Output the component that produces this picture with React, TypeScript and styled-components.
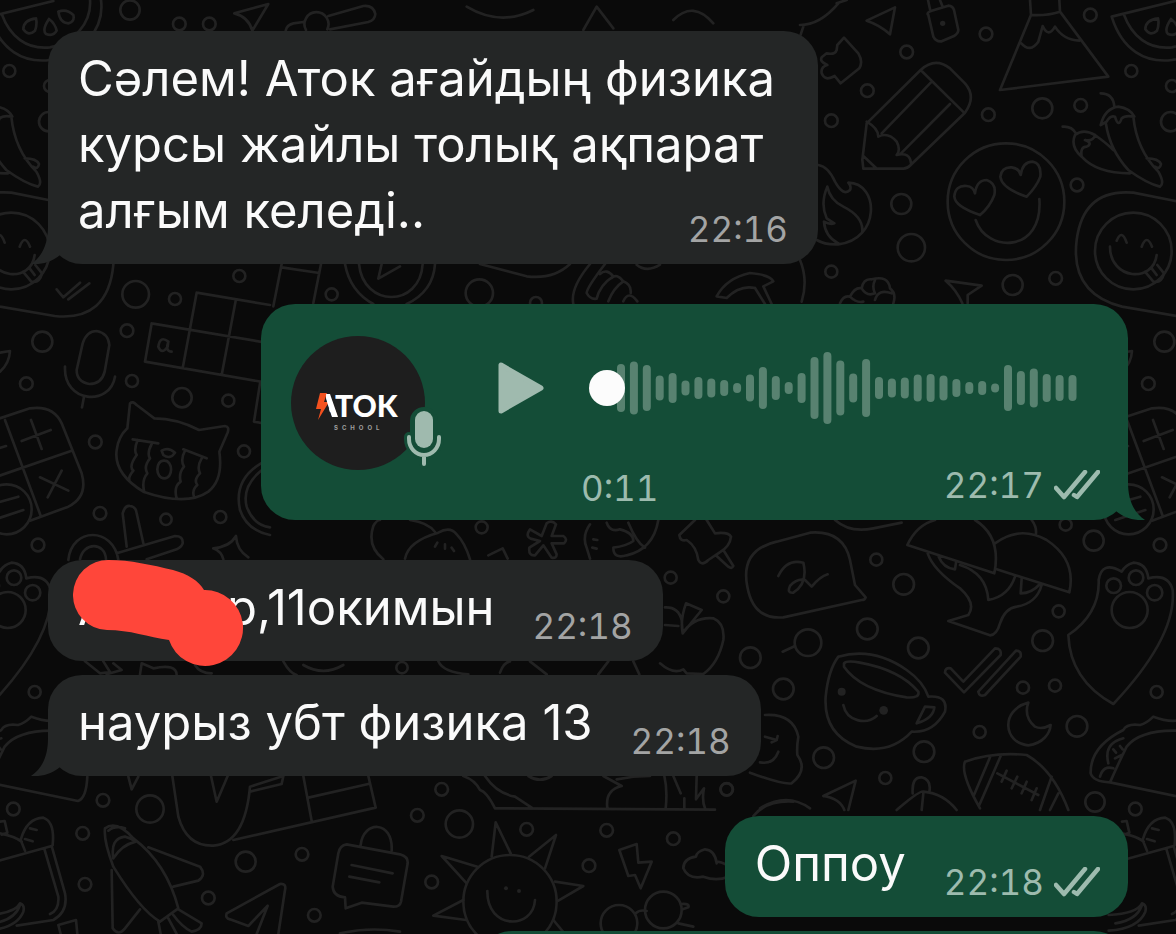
import React from "react";
import styled, { createGlobalStyle, css } from "styled-components";

const GREEN = "#144d37";
const GRAY = "#242626";

const GlobalStyle = createGlobalStyle`
  *, *::before, *::after { box-sizing: border-box; }
  body {
    margin: 0;
    background: #0a0a0a;
    font-family: Inter, "Noto Sans", sans-serif;
  }
`;

const Screen = styled.main`
  position: relative;
  height: 100vh;
  overflow: hidden;
  isolation: isolate;
`;

const Wallpaper = styled.svg`
  position: absolute;
  inset: 0;
  width: 100%;
  height: 100%;
  z-index: -1;
  fill: none;
  stroke: #222222;
  stroke-width: 8;
  stroke-linecap: round;
  stroke-linejoin: round;
`;

const Thread = styled.div`
  display: flex;
  flex-direction: column;
  gap: 40px;
  padding: 31px 48px;
`;

const Group = styled.section<{ $own?: boolean }>`
  display: flex;
  flex-direction: column;
  gap: 14px;
  align-items: ${(p) => (p.$own ? "flex-end" : "flex-start")};
`;

const bubble = css<{ $own?: boolean }>`
  position: relative;
  border-radius: 34px;
  background: ${(p) => (p.$own ? GREEN : GRAY)};
  color: #fafafa;
`;

const TextBubble = styled.article<{ $own?: boolean }>`
  ${bubble}
  display: flow-root;
  max-width: 770px;
  padding: 15px ${(p) => (p.$own ? 28 : 30)}px 20px 30px;
  font-size: 49px;
  line-height: 66px;
`;

const VoiceBubble = styled.article<{ $own?: boolean }>`
  ${bubble}
  display: flex;
  width: 867px;
  max-width: 100%;
  min-height: 216px;
  padding: 32px 28px 17px 30px;
`;

const TailShape = styled.svg<{ $own?: boolean }>`
  position: absolute;
  bottom: 0;
  width: 30px;
  height: 40px;
  fill: ${(p) => (p.$own ? GREEN : GRAY)};
  ${(p) => (p.$own ? "right: -18px; transform: scaleX(-1);" : "left: -18px;")}
`;

const Meta = styled.span<{ $own?: boolean; $inline?: boolean }>`
  display: flex;
  align-items: center;
  gap: 10px;
  font-size: 35px;
  font-variant-numeric: tabular-nums;
  line-height: 30px;
  color: ${(p) => (p.$own ? "#9dbbae" : "#a3a4a4")};
  ${(p) => p.$inline && "float: right; margin: 36px 0 0 38px;"}
`;

const TickIcon = styled.svg`
  width: 46px;
  height: 30px;
  fill: none;
  stroke: currentColor;
  stroke-width: 4.5;
  stroke-linecap: round;
  stroke-linejoin: round;
`;

const Redacted = styled.span`
  position: relative;
  display: inline-block;
  width: 149px;
`;

const Scribble = styled.svg`
  position: absolute;
  left: -5px;
  top: -16px;
  width: 172px;
  height: 108px;
  fill: #ff463a;
`;

const Avatar = styled.div`
  position: relative;
  flex: none;
  width: 134px;
  height: 134px;
`;

const Logo = styled.svg`
  display: block;
  width: 134px;
  height: 134px;
`;

const MicBadge = styled.svg`
  position: absolute;
  left: 110px;
  top: 67px;
  width: 46px;
  height: 72px;
`;

const PlayButton = styled.button`
  flex: none;
  align-self: flex-start;
  width: 48px;
  height: 54px;
  margin: 25px 0 0 72px;
  padding: 0;
  border: 0;
  background: none;
  color: #9fbaae;
  cursor: pointer;

  svg { display: block; width: 48px; height: 54px; }
`;

const Player = styled.div`
  display: flex;
  flex: 1;
  flex-direction: column;
  justify-content: space-between;
  margin-left: 36px;
`;

const Track = styled.div`
  display: grid;
  align-items: center;
  width: 488px;
  max-width: 100%;
  height: 104px;
  margin-left: 8px;

  > * { grid-area: 1 / 1; }
`;

const Wave = styled.svg`
  width: 460px;
  height: 72px;
  margin-left: 28px;
  fill: #588270;
`;

const Seek = styled.input`
  appearance: none;
  width: 100%;
  height: 36px;
  margin: 0;
  background: transparent;
  cursor: pointer;

  &::-webkit-slider-thumb {
    appearance: none;
    width: 36px;
    height: 36px;
    border: 0;
    border-radius: 50%;
    background: #fcfcfc;
  }
`;

const PlayerFooter = styled.div`
  display: flex;
  justify-content: space-between;
  align-items: flex-start;
`;

const Duration = styled(Meta)`
  padding-top: 3px;
`;

const NextBubble = styled.article<{ $own?: boolean }>`
  ${bubble}
  width: 650px;
  height: 101px;
`;

const LEVELS = [
  48, 53, 46, 25, 30, 15, 22, 19, 16, 10, 27, 42, 24, 12, 30, 62, 72, 55, 29,
  58, 22, 19, 21, 27, 28, 25, 18, 12, 14, 9, 46, 34, 39, 28, 26, 26,
];

const Tail = ({ own }: { own?: boolean }) => (
  <TailShape $own={own} viewBox="0 0 30 40" aria-hidden="true">
    <path d="M18 2C18 19 13 32 1 40C13 41 23 37 30 31V2Z" />
  </TailShape>
);

const Ticks = () => (
  <TickIcon viewBox="0 0 46 30" role="img" aria-label="Delivered">
    <path d="M2 18L10 27L31 2M20 25L23 27L44 2" />
  </TickIcon>
);

const Stamp = ({ time, own, inline }: { time: string; own?: boolean; inline?: boolean }) => (
  <Meta $own={own} $inline={inline}>
    <time>{time}</time>
    {own && <Ticks />}
  </Meta>
);

type Sheet = { at: [number, number]; rings: number[][]; dots?: number[][]; lines: string };

// Doodles are grouped in sheets, each drawn at three times its final size.
const SHEETS: Sheet[] = [
  {
    at: [0, 0],
    rings: [[538, 72, 19], [628, 72, 19], [390, 30, 29], [28, 213, 18], [718, 828, 18], [150, 258, 18]],
    lines: `M-31 50L160 3M-31 50C0 150 70 190 150 180C240 170 315 90 303 0M5 42C30 110 80 150 150 142C220 130 275 70 270 0
      M108 55Q70 60 70 88Q85 110 105 92Q112 75 108 55M147 57Q125 90 138 102Q160 110 170 92Q165 70 147 57M175 35Q180 70 205 70Q225 65 220 45Q200 25 175 35
      M703 40L805 12L757 92M703 40Q745 50 757 92M985 48L1090 18Q1120 15 1126 42Q1125 60 1105 66L990 88M918 90A36 36 0 1 1 982 88M857 92Q860 75 880 70L910 66
      M1400 20Q1500 80 1600 30M1750 90L1790 20L1840 85M2020 60Q2080 0 2140 70`,
  },
  {
    at: [800, 0],
    rings: [[558, 102, 19], [320, 156, 19], [202, 272, 19], [94, 362, 19], [871, 45, 19], [727, 325, 30], [842, 316, 19], [565, 344, 19], [831, 555, 19], [304, 612, 30], [334, 743, 41], [94, 815, 18], [638, 855, 30], [767, 835, 19], [1112, 365, 29], [618, 605, 175], [1000, 753, 115]],
    dots: [[428, 70, 8]],
    lines: `M285 22L200 62Q240 75 270 103ZM385 45Q378 38 395 32L445 17Q458 18 462 30L475 90Q475 100 462 108L425 124Q408 126 400 110ZM390 28L384 0M427 18L420 0
      M132 113L175 160Q190 185 178 205L122 250L104 228Q75 245 65 220Q62 200 82 195Q58 185 65 172L80 160Q105 165 110 150L112 135Z
      M362 210Q405 170 450 205L495 250Q530 290 495 338L332 495Q322 506 310 506L190 506L187 480L200 370ZM362 210L492 338M395 245L245 400M450 312L303 460M200 365Q235 385 235 410Q265 395 290 425Q303 450 290 465Q330 455 333 490M190 468L228 504
      M690 0L693 45L600 270L925 230L780 35L778 0M693 45Q740 48 780 35M664 130Q690 160 715 125L728 78Q745 115 765 80Q790 120 838 122
      M918 372Q930 450 985 510Q1040 550 1080 560Q1095 550 1075 515Q1010 450 1000 350M902 375Q915 325 955 320Q990 325 1003 350Q975 345 965 355Q955 385 945 350Q930 345 920 365ZM943 320Q940 280 902 280
      M845 470Q890 520 990 520M885 405Q920 430 940 450M825 405Q810 440 845 470Q840 440 860 440Q880 430 855 420Q880 425 885 405Q850 385 825 405M828 400Q815 378 788 380M1040 475Q1075 475 1083 492Q1080 510 1065 500
      M540 645Q465 620 463 590Q465 555 500 558Q520 560 525 580Q530 540 560 540Q590 550 583 585Q570 620 540 645M680 590Q605 565 601 530Q605 500 635 502Q658 505 662 525Q668 485 698 485Q725 490 721 530Q710 560 680 590M527 660C560 760 730 760 718 597
      M55 495Q85 500 105 545Q130 590 150 570Q155 560 145 548C240 550 240 720 115 733Q75 735 50 720M82 560Q90 600 130 620Q190 650 187 695M82 560Q60 610 80 655L103 670Q90 675 72 665Q75 710 115 730
      M950 722Q965 685 980 728M1025 740Q1040 700 1056 740M930 740C930 840 1060 850 1070 765M1035 815L1060 845Q1085 850 1092 820L1072 795M1055 805L1070 825
      M1111 600L1000 578Q850 565 830 720Q810 880 966 920L1130 948Q1290 965 1306 795V640L1111 600
      M120 910Q130 885 150 890Q165 860 185 865Q190 835 215 838Q265 825 270 865Q290 880 280 910M150 890Q170 910 190 905M185 865Q200 890 225 880Q215 860 225 840M225 900Q235 865 275 880M487 910Q470 870 437 842L545 857L503 885V910M0 75Q60 75 115 10M10 80L0 110M110 10L140 0M0 780Q25 840 5 905`,
  },
  {
    at: [0, 280],
    rings: [[407, 43, 40], [525, 57, 18], [381, 152, 19], [127, 185, 30], [79, 311, 19], [396, 303, 18], [546, 353, 29], [685, 362, 18], [286, 486, 19], [732, 514, 18], [300, 700, 19], [498, 718, 17], [661, 711, 18], [114, 795, 19], [20, 688, 75]],
    lines: `M170 28L190 52L240 8M205 58L268 10M248 190Q260 153 290 153Q325 160 328 195L314 275Q305 312 268 312Q230 305 230 270ZM195 260C190 370 330 380 345 290M252 350L246 382
      M590 38L810 75M455 130L810 190M435 245L800 308M590 38L548 265M707 62L665 285M455 130L435 245M780 310L762 425L800 432M505 185Q480 165 475 200Q485 225 503 200L505 185Q495 215 515 215
      M382 445L390 370Q398 362 410 375L463 415Q530 415 597 450L675 438Q690 440 682 460L658 515Q670 600 625 635Q560 680 430 635Q340 580 350 510Q355 470 382 445
      M398 478L475 490M550 508L620 535M413 480Q400 510 410 525Q385 560 400 572Q385 590 388 600M455 492Q440 520 450 535Q430 560 442 580Q425 600 432 632M555 512Q540 540 552 560Q535 580 542 605Q520 620 530 655M605 535Q590 560 600 580Q580 600 592 615Q575 630 582 650
      M485 512Q505 500 525 518Q510 540 490 525ZM493 542C465 540 465 595 493 595C520 595 520 542 493 542
      M-10 418L90 385Q160 375 185 430L245 580Q265 650 205 680L90 722M15 420L123 710M-30 597L215 512M65 483L152 450M93 420L125 507M120 592L205 632M185 572L143 652M-20 510L18 498M-15 670L55 650M-20 720L70 690
      M783 550Q700 600 720 690Q740 750 810 765M783 572Q725 620 740 680Q760 735 810 742M380 800L368 700Q375 675 390 678Q408 680 410 700L430 790M350 820L525 768Q550 768 548 790Q545 800 530 808L440 838M205 840C215 740 340 740 355 840M240 838C250 785 315 785 318 838
      M640 805Q690 800 708 768Q710 810 745 832M640 805Q665 815 670 838M0 218L30 213Q28 250 0 275`,
  },
  {
    at: [660, 510],
    rings: [[32, 203, 18], [190, 259, 18], [649, 149, 18], [731, 223, 31], [622, 357, 31], [775, 414, 31], [444, 398, 40], [271, 443, 31], [370, 537, 31], [491, 743, 31], [676, 804, 18], [792, 725, 31], [959, 666, 18], [1089, 533, 18], [1185, 527, 18], [1148, 392, 31], [1196, 304, 18], [1217, 44, 18], [1301, 92, 30], [1490, 546, 18], [1251, 649, 31], [200, 838, 18], [1305, 876, 29], [1361, 227, 22], [1428, 203, 22], [1484, 248, 23], [1409, 300, 54]],
    dots: [[545, 545, 12], [671, 601, 13]],
    lines: `M368 425L405 408M105 30L58 75Q60 95 80 90Q110 110 115 150Q125 170 145 150L178 128Q210 110 213 80Q205 65 165 70L140 30M190 120L220 168Q215 178 205 170L170 138
      M350 95L450 68Q550 60 570 150L585 225L617 262Q615 270 605 270L370 322Q280 330 262 230Q240 120 350 95ZM355 198Q380 145 430 158Q445 220 400 248Q380 250 390 228Q410 205 435 210L455 230Q480 200 503 193M525 30Q570 70 640 55L725 38
      M825 30Q770 45 742 105L1003 190Q1025 80 945 30M1005 100Q1080 45 1160 90Q1250 150 1228 247L1010 178M803 130Q820 180 900 235Q950 280 925 315L865 333L990 376Q1010 375 1020 340Q1035 295 1070 290Q1130 280 1145 225M835 138Q850 175 885 178L888 158M900 165Q980 190 985 270Q1045 260 1065 200M1085 205L1082 250Q1115 250 1140 222M1115 30Q1130 50 1128 70
      M1385 185Q1325 150 1316 210Q1320 310 1225 375Q1230 510 1360 582Q1550 380 1538 240Q1525 190 1465 205Q1460 160 1420 158Q1395 165 1385 185
      M535 440Q640 410 740 480Q790 515 805 560Q865 555 855 605Q820 670 755 665Q690 735 590 710Q490 670 497 560Q505 480 535 440M552 460Q560 450 600 458Q720 480 775 545Q780 565 740 562Q600 540 552 470ZM795 590L823 592Q820 625 770 640ZM550 585C560 635 620 645 650 618
      M855 488Q855 472 872 475L910 515L1005 415Q1025 415 1022 435L912 547ZM955 545L1068 422Q1085 422 1082 440L975 555Q958 562 955 545M1105 578C1020 600 1030 700 1105 706C1150 700 1170 670 1172 645Q1145 660 1125 650Q1090 620 1105 578
      M915 755Q1000 725 1100 735Q1180 780 1225 900M915 755Q900 790 960 895M990 742L942 855M1022 738L958 885M1175 800L1140 900M1195 850L1170 900M1012 790L1135 855M1040 782L1025 815M1072 800L1055 835M1100 815L1085 850M1130 835L1115 870
      M1548 632Q1520 635 1480 620Q1460 640 1440 645Q1400 640 1390 660Q1290 710 1292 790Q1300 815 1350 817L1620 873Q1645 865 1648 800M1350 817Q1380 750 1400 710Q1440 660 1548 662Q1640 680 1650 790M1548 632L1620 660M1345 760Q1330 700 1390 685M1320 800Q1330 765 1360 775M1360 718L1368 728M1380 708L1388 718M1365 745L1385 735
      M315 615Q400 610 415 680Q410 710 412 735Q445 780 395 820Q370 825 270 788M315 680L350 690L353 678M350 690L335 697M300 757Q340 765 355 725M490 858L587 812L565 900M490 858Q540 865 553 900M710 900Q780 840 790 845Q850 850 890 900M758 850Q755 800 785 802Q815 810 808 845M790 850L785 900M300 895Q380 845 450 895
      M15 292Q55 290 65 330L68 370Q100 320 160 325Q195 340 190 390Q175 460 130 492L80 490L70 478Q40 495 0 460M78 280L125 300L68 370Q60 330 78 280M15 345L55 348`,
  },
  {
    at: [0, 760],
    rings: [[40, 147, 19], [309, 121, 19], [248, 220, 19], [450, 147, 41], [255, 373, 19], [737, 305, 30], [906, 283, 19], [625, 414, 19], [943, 466, 19]],
    lines: `M315 205Q350 180 400 235Q500 310 535 445L480 485Q420 450 340 320Q310 240 315 205M340 295Q330 235 375 230Q395 235 407 245Q365 255 340 295M325 212Q345 195 375 205M445 262L600 320Q620 345 595 362L520 380M335 330L338 505Q355 530 375 505L420 448M475 485L482 522M505 475L530 522M535 448L605 490Q605 510 575 515Q545 500 520 465
      M-40 312L155 258L195 400Q205 455 160 480L50 497M133 267L175 410Q178 450 150 462M75 272L62 240Q80 175 130 173Q165 185 158 255M90 205L110 210M75 237L98 244M-30 215Q40 225 65 245M0 185L14 183L22 218L5 224M-40 465Q45 460 60 430Q75 435 70 455Q50 505 -40 512M-20 490Q45 480 60 435
      M175 495L228 480L232 522M175 495L182 522M517 48L535 170Q560 260 640 257Q735 250 750 80L850 48M633 48L650 125L683 48M700 240L1127 143L1105 48M910 48L935 183M925 113L1105 72M750 95L845 72L850 48M385 50L395 88L415 50
      M680 460L840 372Q860 370 855 390L835 522M680 460Q675 475 690 478L745 498L803 437L770 522M1200 283L1040 253Q1020 255 1015 280L998 380Q1000 410 1035 412L1037 445L1085 428L1180 440Q1200 440 1203 425L1223 310Q1225 290 1200 283M1082 255C1090 180 1180 180 1175 272M1055 315L1178 340M1048 350L1138 367M1020 520Q1110 500 1200 515`,
  },
  {
    at: [400, 760],
    rings: [[125, 88, 19], [52, 166, 19], [178, 192, 41], [380, 208, 19], [620, 211, 19], [820, 236, 19], [567, 317, 19], [95, 366, 19], [980, 88, 19], [330, 425, 140], [657, 490, 55], [790, 450, 55]],
    dots: [[318, 385, 6], [357, 393, 6]],
    lines: `M190 48Q225 60 240 90Q260 95 285 145L945 149M255 48Q290 100 345 110L395 143M385 48Q420 70 455 48M610 48L665 78Q615 90 622 143M650 58Q700 48 750 48M793 48Q803 90 797 145M820 48L842 100M853 115V143M890 48L888 118L912 85Q905 120 915 145
      M275 290L287 187L332 280M387 290L468 225L435 325M465 365L550 378L475 422M232 320L125 288L200 370M190 420L100 467L198 480M460 480L495 522M262 393C260 510 400 510 405 420
      M658 270L710 252L715 308L755 305L722 385L705 345L685 348ZM975 312Q950 300 950 310Q945 270 915 268Q890 275 888 290Q850 295 850 325Q865 360 910 350Q950 365 985 350M707 460Q720 448 740 453M845 432Q870 430 865 442L848 448M835 490L880 500M1060 168Q1100 120 1180 125`,
  },
  {
    at: [360, 516],
    rings: [[365, 34, 18], [126, 455, 17]],
    lines: `M70 130Q20 90 40 30Q50 12 60 12M135 128Q145 75 235 50Q270 30 290 55Q315 80 330 130M150 12Q205 20 225 48M232 80L225 92M255 85V98M275 95L282 105
      M545 60L510 40Q495 60 512 68L540 75L508 95Q505 120 525 118L550 88L575 125Q590 128 590 115L575 82L612 82Q625 70 610 60L575 60L588 25Q575 10 560 22ZM385 118L428 97L443 128
      M690 25Q665 60 680 95L690 128M700 70L712 72M697 95L710 98M740 20Q750 50 780 40Q820 50 820 75Q800 90 760 95Q760 130 800 118Q880 100 895 12M805 20Q830 80 855 95
      M235 436Q250 470 325 475M420 470Q430 440 450 436M510 436L560 475M715 475L745 436M820 436L838 475M-825 436L-780 472L-750 468L-770 436M-740 442L-715 462L-760 475M-660 475L-655 442L-620 457Q-550 442 -550 477M-495 447Q-480 472 -445 472M-230 436Q-210 472 -190 477M-170 447Q-110 482 -50 447`,
  },
  {
    at: [240, 258],
    rings: [[275, 109, 18], [718, 105, 41], [888, 135, 18]],
    lines: `M125 18L100 145M125 28L238 45M243 18L220 135M315 18Q330 100 400 138M585 18Q580 100 500 138M357 18C370 150 540 150 548 18M425 18L415 62L480 25M720 18L860 55Q940 65 990 18
      M1050 18Q990 90 1000 138M1095 18Q1040 90 1040 105Q1050 125 1070 122Q1080 80 1120 55Q1100 30 1080 48M1105 130Q1120 90 1150 70Q1130 45 1115 60M1150 70Q1175 80 1172 105M1150 130Q1165 95 1192 130M1190 20Q1220 45 1260 20
      M1430 115Q1460 60 1530 45Q1590 50 1600 70L1570 85L1595 138M1545 90L1575 138M1430 115L1460 120Q1500 80 1545 90`,
  },
];

const Doodles = () => (
  <Wallpaper viewBox="0 0 1176 934" preserveAspectRatio="xMinYMin slice" aria-hidden="true">
    <defs>
      <g id="doodles">
        {SHEETS.map((s) => (
          <g key={s.at.join()} transform={`translate(${s.at[0]} ${s.at[1]}) scale(0.33333)`}>
            {s.rings.map(([x, y, r]) => (
              <circle key={`${x}-${y}`} cx={x} cy={y} r={r} />
            ))}
            {s.dots?.map(([x, y, r]) => (
              <circle key={`${x}-${y}`} cx={x} cy={y} r={r} fill="#222222" stroke="none" />
            ))}
            <path d={s.lines} />
          </g>
        ))}
      </g>
    </defs>
    <use href="#doodles" />
    <use href="#doodles" x="-1122" />
    <use href="#doodles" x="1122" />
  </Wallpaper>
);

const SchoolAvatar = () => (
  <Avatar>
    <Logo viewBox="0 0 134 134" role="img" aria-label="ATOK School">
      <circle cx="67" cy="67" r="67" fill="#1e1e1e" />
      <text x="25" y="81" fill="#fff" fontFamily="Lato, sans-serif" fontWeight="900" fontSize="30">ATOK</text>
      <path d="M22 54H35L35 62L41 84H22Z" fill="#1e1e1e" />
      <path d="M29 57H36L33 66H38L27 84L30 73H25Z" fill="#f4511e" />
      <path d="M35 58H39L47 81H41L36 66Z" fill="#fff" />
      <text x="43" y="94" fill="#a0a0a0" fontFamily="Inter, sans-serif" fontWeight="700" fontSize="6" letterSpacing="4">SCHOOL</text>
    </Logo>
    <MicBadge viewBox="0 0 46 72" aria-hidden="true">
      <g fill="none" stroke={GREEN} strokeWidth="10" strokeLinecap="round">
        <path d="M8 34V36A15 15 0 0 0 38 36V34M23 52V61" />
        <rect x="14" y="9" width="18" height="37" rx="9" />
      </g>
      <rect x="14" y="8" width="18" height="37" rx="9" fill="#9fbaae" />
      <path d="M8 34V36A15 16 0 0 0 38 36V34M23 52V61" fill="none" stroke="#9fbaae" strokeWidth="4" strokeLinecap="round" />
    </MicBadge>
  </Avatar>
);

const VoiceMessage = () => (
  <VoiceBubble $own>
    <SchoolAvatar />
    <PlayButton type="button" aria-label="Play">
      <svg viewBox="0 0 48 54" aria-hidden="true">
        <path d="M4 4V50L44 27Z" fill="currentColor" stroke="currentColor" strokeWidth="5" strokeLinejoin="round" />
      </svg>
    </PlayButton>
    <Player>
      <Track>
        <Wave viewBox="0 0 460 72" aria-hidden="true">
          {LEVELS.map((h, i) => (
            <rect key={i} x={i * 12.9} y={36 - h / 2} width="8" height={h} rx="4" />
          ))}
        </Wave>
        <Seek type="range" min={0} max={11} defaultValue={0} aria-label="Seek" />
      </Track>
      <PlayerFooter>
        <Duration $own>0:11</Duration>
        <Stamp time="22:17" own />
      </PlayerFooter>
    </Player>
    <Tail own />
  </VoiceBubble>
);

export default function App() {
  return (
    <Screen lang="kk">
      <GlobalStyle />
      <Doodles />
      <Thread>
        <Group>
          <TextBubble>
            Сәлем! Аток ағайдың физика курсы жайлы толық ақпарат алғым келеді..
            <Stamp time="22:16" inline />
            <Tail />
          </TextBubble>
        </Group>
        <Group $own>
          <VoiceMessage />
        </Group>
        <Group>
          <TextBubble>
            <Redacted>
              А
              <Scribble viewBox="73 559 172 108" aria-hidden="true">
                <path d="M109 560C130 560 152 565 173 570C188 574 199 581 204 590A38 38 0 1 1 169 640C148 637 130 630 107 630A35 35 0 0 1 109 560Z" />
              </Scribble>
            </Redacted>
            р,11окимын
            <Stamp time="22:18" inline />
          </TextBubble>
          <TextBubble>
            наурыз убт физика 13
            <Stamp time="22:18" inline />
            <Tail />
          </TextBubble>
        </Group>
        <Group $own>
          <TextBubble $own>
            Оппоу
            <Stamp time="22:18" own inline />
          </TextBubble>
          <NextBubble $own />
        </Group>
      </Thread>
    </Screen>
  );
}
